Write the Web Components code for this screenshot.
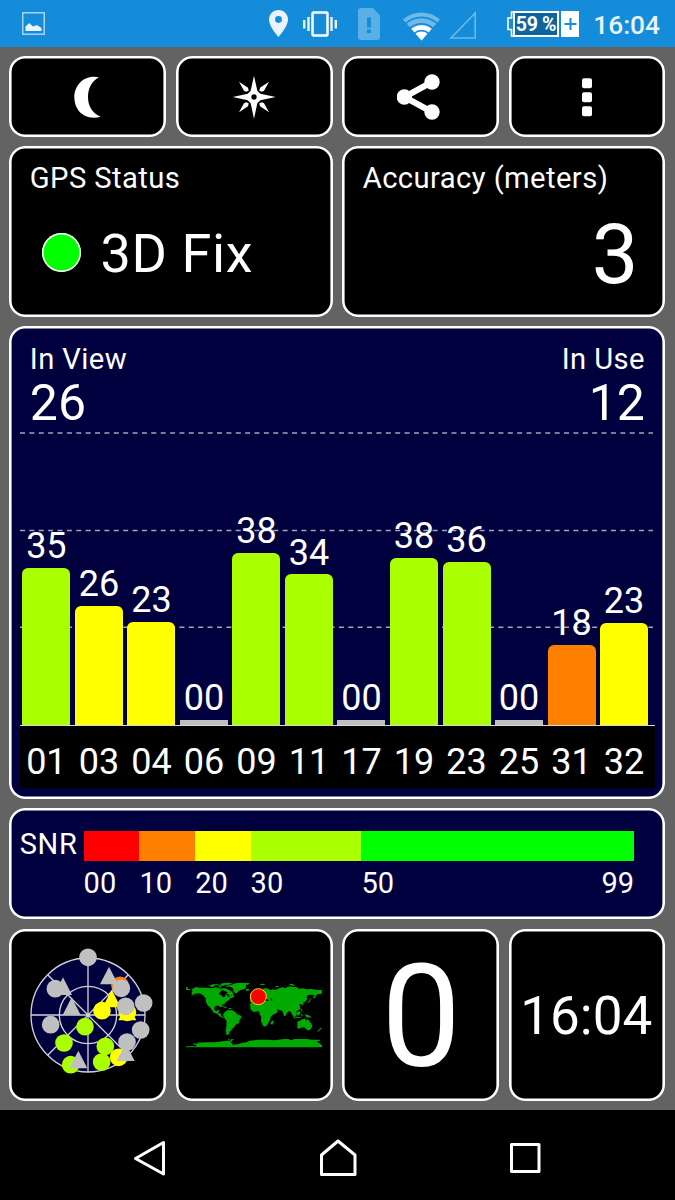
<!DOCTYPE html>
<html lang="en">
<head>
<meta charset="utf-8">
<title>GPS Status</title>
<style>
  html, body {
    margin: 0;
    height: 100%;
    background: #000;
  }
  body {
    font-family: Roboto, "Liberation Sans", sans-serif;
    color: #fff;
  }
</style>
</head>
<body>
<gps-app></gps-app>

<script>
class StatusBar extends HTMLElement {
  constructor() {
    super();
    this.attachShadow({ mode: "open" });
    this.shadowRoot.innerHTML = `
      <style>
        :host {
          display: flex;
          align-items: center;
          height: 47px;
          padding: 0 15px 0 22px;
          box-sizing: border-box;
          background: #148cd9;
        }
        svg { display: block; flex: none; }
        .spacer { flex: 1; }
        .vibrate { margin-left: 15px; }
        .sim { margin-left: 20.5px; }
        .wifi { margin-left: 23px; margin-top: 5px; }
        .signal { margin-left: 9.500px; margin-top: 3px; }
        .battery {
          display: flex;
          align-items: stretch;
          height: 26px;
          margin-left: 31px;
        }
        .level {
          width: 46px;
          box-sizing: border-box;
          border: 2px solid #fff;
          background: #0e649b;
          font-size: 19.500px;
          font-weight: 700;
          line-height: 24px;
          text-align: center;
          letter-spacing: -0.300px;
          white-space: nowrap;
        }
        .plus {
          width: 18.500px;
          margin-left: 1.500px;
          background: #fff;
        }
        .clock {
          width: 68px;
          margin-left: 13px;
          font-size: 26.300px;
          font-weight: 500;
          line-height: 32px;
          padding-top: 2px;
          text-align: right;
          color: #e8f3fb;
        }
      </style>
      <svg width="23" height="23" viewBox="0 0 23 23">
        <rect x=".75" y=".75" width="21.5" height="21.5" fill="none" stroke="#a6d3f1" stroke-width="1.5"/>
        <path d="M3.500 19V14.500L7.300 11l3.700 3.500 4-1.500 4.500 3V19z" fill="#e8f3fb"/>
      </svg>
      <div class="spacer"></div>
      <svg width="19" height="27" viewBox="0 0 19 27">
        <path fill="#e8f3fb" fill-rule="evenodd" d="M9.500 0C4.200 0 0 4.200 0 9.500 0 16.500 9.500 27 9.500 27S19 16.500 19 9.500C19 4.200 14.800 0 9.500 0zm0 6a3.400 3.400 0 1 1 0 6.800 3.400 3.400 0 0 1 0-6.800z"/>
      </svg>
      <svg class="vibrate" width="34" height="26" viewBox="0 0 34 26">
        <rect x="9.500" y="1.500" width="15" height="23" rx="1" fill="none" stroke="#fff" stroke-width="2.500"/>
        <path d="M1.200 9v8.500M5.500 6v14M28.500 6v14M32.800 9v8.500" stroke="#e8f3fb" stroke-width="2.400"/>
      </svg>
      <svg class="sim" width="22" height="32" viewBox="0 0 22 32">
        <path d="M3 0h12l7 7.500V29a3 3 0 0 1-3 3H3a3 3 0 0 1-3-3V3a3 3 0 0 1 3-3z" fill="#5aafe4"/>
        <path d="M9 9.500h4v10H9zM9 21.500h4v3.500H9z" fill="#148cd9"/>
      </svg>
      <svg class="wifi" width="37" height="29" viewBox="0 0 37 29">
        <path d="M0 7.500A28 28 0 0 1 37 7.500L18.500 28.500z" fill="#6eb9e8"/>
        <path d="M8.500 17A15 15 0 0 1 28.500 17L18.500 28.500z" fill="#fff"/>
        <path d="M2.500 11.700A23.500 23.500 0 0 1 34.500 11.700M7 16.200A17.500 17.500 0 0 1 30 16.200M11.500 21.300A10.500 10.500 0 0 1 25.500 21.300" fill="none" stroke="#148cd9" stroke-width="1.600"/>
      </svg>
      <svg class="signal" width="27" height="28" viewBox="0 0 27 28">
        <path d="M2 27L26.200 2V27z" fill="none" stroke="#6eb9e8" stroke-width="1.600"/>
      </svg>
      <div class="battery">
        <svg width="6" height="26" viewBox="0 0 6 26">
          <path d="M7 1H4.500V7H1V18.500H4.500V25H7" fill="#148cd9" stroke="#fff" stroke-width="1.600"/>
        </svg>
        <div class="level">59 %</div>
        <svg class="plus" width="18.500" height="26" viewBox="0 0 18.500 26">
          <path d="M3.500 13h12M9.500 7v12" stroke="#148cd9" stroke-width="2"/>
        </svg>
      </div>
      <div class="clock">16:04</div>
    `;
  }
}
customElements.define("status-bar", StatusBar);

class TileCard extends HTMLElement {
  constructor() {
    super();
    this.attachShadow({ mode: "open" });
    this.shadowRoot.innerHTML = `
      <style>
        :host {
          display: flex;
          flex-direction: column;
          box-sizing: border-box;
          min-width: 0;
          border-radius: 16px;
          background: #000;
          box-shadow: inset 0 0 0 2.600px #fff;
        }
        :host([navy]) { background: #00003f; }
        :host([center]) {
          align-items: center;
          justify-content: center;
        }
      </style>
      <slot></slot>
    `;
  }
}
customElements.define("tile-card", TileCard);

class SatBar extends HTMLElement {
  static get observedAttributes() {
    return ["snr", "height", "color"];
  }

  constructor() {
    super();
    this.attachShadow({ mode: "open" });
    this.shadowRoot.innerHTML = `
      <style>
        :host {
          display: flex;
          flex-direction: column;
          justify-content: flex-end;
          align-items: center;
        }
        .snr {
          font-size: 36px;
          line-height: 36px;
          margin-bottom: 3.600px;
        }
        .bar {
          width: 48px;
          border-radius: 6px 6px 0 0;
        }
        .bar.empty { border-radius: 0; }
      </style>
      <div class="snr"></div>
      <div class="bar"></div>
    `;
  }

  attributeChangedCallback() {
    const bar = this.shadowRoot.querySelector(".bar");
    const snr = this.getAttribute("snr");
    this.shadowRoot.querySelector(".snr").textContent = snr;
    bar.style.height = this.getAttribute("height") + "px";
    bar.style.background = this.getAttribute("color");
    bar.classList.toggle("empty", snr === "00");
  }
}
customElements.define("sat-bar", SatBar);

const GREEN = "#aaff00";
const YELLOW = "#ffff00";
const ORANGE = "#ff8000";
const GRAY = "#c0c0c0";

// id, signal, bar height in px, colour
const SATELLITES = [
  ["01", "35", 157, GREEN],
  ["03", "26", 118.7, YELLOW],
  ["04", "23", 102.7, YELLOW],
  ["06", "00", 5, GRAY],
  ["09", "38", 172, GREEN],
  ["11", "34", 150.3, GREEN],
  ["17", "00", 5, GRAY],
  ["19", "38", 167, GREEN],
  ["23", "36", 162.7, GREEN],
  ["25", "00", 5, GRAY],
  ["31", "18", 80, ORANGE],
  ["32", "23", 101.7, YELLOW]
];

class SnrChart extends HTMLElement {
  constructor() {
    super();
    this.attachShadow({ mode: "open" });
    const bars = SATELLITES.map(([id, snr, height, color]) =>
      `<sat-bar snr="${snr}" height="${height}" color="${color}"></sat-bar>`).join("");
    const ids = SATELLITES.map(([id]) => `<span>${id}</span>`).join("");
    this.shadowRoot.innerHTML = `
      <style>
        :host { display: block; }
        .plot {
          display: grid;
          height: 293px;
        }
        .lines, .bars { grid-area: 1 / 1; }
        .bars, .ids {
          display: grid;
          grid-template-columns: repeat(12, 52.520px);
          padding-left: 0.150px;
        }
        .ids {
          height: 62px;
          box-sizing: border-box;
          padding-top: 8.700px;
          background: #000;
          font-size: 36px;
          line-height: 54px;
          text-align: center;
        }
        .axis { height: 1.200px; background: #d8d8d8; }
      </style>
      <div class="plot">
        <svg class="lines" width="635" height="293" viewBox="0 0 635 293">
          <path d="M0 1H633M0 98.500H633M0 195.200H633" stroke="#a3a3bd" stroke-width="1.600" stroke-dasharray="5 4.380"/>
        </svg>
        <div class="bars">${bars}</div>
      </div>
      <div class="axis"></div>
      <div class="ids">${ids}</div>
    `;
  }
}
customElements.define("snr-chart", SnrChart);

class SnrScale extends HTMLElement {
  constructor() {
    super();
    this.attachShadow({ mode: "open" });
    this.shadowRoot.innerHTML = `
      <style>
        :host {
          display: flex;
          font-size: 29px;
        }
        .name {
          width: 63.800px;
          line-height: 26px;
          letter-spacing: 0.600px;
        }
        .scale {
          display: grid;
          grid-template-columns: 55.800px 55.800px 55.400px 110.800px 272.700px;
        }
        .step i { display: block; height: 30px; }
        .step div {
          display: flex;
          justify-content: space-between;
          margin-top: 5px;
          line-height: 34px;
        }
      </style>
      <div class="name">SNR</div>
      <div class="scale">
        <div class="step"><i style="background:#f00"></i><div>00</div></div>
        <div class="step"><i style="background:${ORANGE}"></i><div>10</div></div>
        <div class="step"><i style="background:${YELLOW}"></i><div>20</div></div>
        <div class="step"><i style="background:${GREEN}"></i><div>30</div></div>
        <div class="step"><i style="background:#0f0"></i><div><span>50</span><span>99</span></div></div>
      </div>
    `;
  }
}
customElements.define("snr-scale", SnrScale);

class SkyPlot extends HTMLElement {
  constructor() {
    super();
    this.attachShadow({ mode: "open" });
    const dot = (x, y, c) => `<circle cx="${x}" cy="${y}" r="26.500" fill="${c}"/>`;
    const tri = (x, y, c) => `<path d="M${x} ${y - 27}l27 53h-54z" fill="${c}"/>`;
    this.shadowRoot.innerHTML = `
      <style>
        :host { display: block; }
        svg { display: block; }
      </style>
      <svg width="136" height="136" viewBox="59 66 408 408">
        <circle cx="263" cy="270" r="171" fill="#00003f"/>
        <g fill="none" stroke="#d0d0dc" stroke-width="4">
          <circle cx="263" cy="270" r="171"/>
          <circle cx="263" cy="270" r="86"/>
          <path d="M263 99V441M92 270H434M142 149L384 391M142 391L384 149"/>
        </g>
        ${dot(263, 97, GRAY)}
        ${dot(359, 181, ORANGE)}
        ${tri(326, 152, GRAY)}
        ${dot(363, 190, GRAY)}
        ${tri(188, 184, GRAY)}
        ${dot(165, 191, GRAY)}
        ${tri(214, 244, GRAY)}
        ${tri(334, 221, YELLOW)}
        ${dot(305, 257, YELLOW)}
        ${dot(381, 262, YELLOW)}
        ${tri(381, 260, YELLOW)}
        ${dot(376, 244, GRAY)}
        ${dot(430, 234, GRAY)}
        ${dot(151, 299, GRAY)}
        ${dot(254, 305, GREEN)}
        ${dot(191, 354, GREEN)}
        ${dot(315, 364, GREEN)}
        ${dot(304, 411, GREEN)}
        ${dot(211, 419, GREEN)}
        ${tri(234, 404, GRAY)}
        ${dot(421, 315, GRAY)}
        ${dot(380, 351, GRAY)}
        ${dot(355, 397, YELLOW)}
        ${tri(376, 382, GRAY)}
      </svg>
    `;
  }
}
customElements.define("sky-plot", SkyPlot);

class WorldMap extends HTMLElement {
  constructor() {
    super();
    this.attachShadow({ mode: "open" });
    this.shadowRoot.innerHTML = `
      <style>
        :host { display: block; }
        svg { display: block; }
      </style>
      <svg width="136.670" height="136" viewBox="46 66 410 408">
        <g fill="#00aa00">
          <path d="M46 187h5v5h8v3H46zM64 192l6-2 5-4 12 2h25l10 2 10-2 8 4 10-1 4 5-6 5-4 6 8 4 6 6 5-1 2-8 8-6 5 6 4 4 6 2-2 4-8 1-2 6-10 5-4 6-8 4-1 6-4 1-4-5h-10l-4 6 1 8 6 2 6-4 2 1-3 8 7 3 2 8 8 3-3 2-11-5-5-7-12-4-6-9-8-10-3-1-6-11-1-12-8-9-10-6-14 1-4 4-8 3 6-6-6-2 4-5z"/>
          <path d="M112 182l12-3 10 3-8 4zM132 186l14 2 8-3-6 6h-14zM122 178h22v3h-18zM148 177l12-3 14-1 10 2-8 4-12 1-8 4zM152 190l12 0 10 4 12 8 2 8-8 1-8-8-8-5-10-3zM144 181h8v4h-8zM184 211l6 0 1 5-8-1z"/>
          <path d="M164 183l16-3 14-5 18-2 24 1-2 4-8 2 0 8-6 5-12 3-8 6-4 4-7-6-2-10-8-5-13 0zM225 192h10v5h-9z"/>
          <path d="M150 241l10 3 10 5-4 1-10-5zM174 249h7v3h-7z"/>
          <path d="M163 260l8-5 14 1 10 6 4 6 13 5-1 7-5 6-1 8-10 5-6 9-6 4-2 6-5 2 0 5-3 3 3 1-5-1-6-7 2-16 1-17-7-9-4-9z"/>
          <path d="M237 238l8-6 12-1 10-1 2 5 10 3 5-2 10 2 4 10 6 10 8 1-4 8-8 9-2 10-4 6-5 9-6 4-6-3-6-14 1-13-6-8 1-6-6-2-12 2-9-7-1-12z"/>
          <path d="M308 285l1 5-4 9-5-2 1-7z"/>
          <path d="M238 229l1-9 8-1 2-6 8-4 6-6 10-1 0-7 10-6 12 3 4 4 6-3 10 2 6-4 14-4 10 3 4-4 12-2 4 2 12 0 8 5 12-1 10 3 14-1 20 3h21v7l-8 0 0 4-12 1-6 4-5 10-3-2 3-9-10-1-8 1-6 7 4 4-8 9-6 4 1 7-3 0-5-5-5 3 4 6-2 9-8 3-2 3 3 8-6 3-3-5-2 4 6 10-3 1-7-11-4-9-6-3-7 6-4 10-4-2-5-14-10-4-8 0-3-2 8 6-5 7-11 4-11-14-1-1 6 14-3-2-6-12 3-7-10-1-2-6 8-3-10 1-2 7-6-3-6-6-6 0-10 9z"/>
          <path d="M264 178l14-2 6 2-8 3zM312 185l8-3 6 1-7 4zM354 178l8-2 14 5-10 1z"/>
          <path d="M237 205l5 3 3 8-8 1 2-6zM436 197l0 9-7 4 1-8z"/>
          <path d="M419 217l1 5-3 9-7 2 6-7zM340 253h3v6h-3zM361 259l6 2 11 11-3 3-6-4zM376 275l14 2v2l-14-1zM379 262l8-4 3 5-5 9-6-3zM389 249l4 2 3 10-4-4zM392 268l4 0-1 7-3-1zM401 268l9 1 9 5 3 5-8-2-5 1-4-5z"/>
          <path d="M380 290l10-4 6-4 7-1 4 6 3-5 4 4 8 10 3 6-3 8-5 5-8 0-6-7-8-1-11 4-4-2 0-9zM412 313h5v3h-5zM449 308l4 3-6 4-5 6-2-2 6-6z"/>
          <path d="M46 364h31v-3l-10-4 1-2 13 2-2-4 30-1 26 0 20-3 24-2 2-4 8-1-3 4-6 5 4 4 2 4 16-1 14-5 12-1 8-5 26-3 34 0 16 2 10-2 20-2 10 0 10 4 8-4 38 0 16 2 24 0 0 3-8 2 2 4 10 4-7 1 17 3v6H46z"/>
          <path d="M164 325h6l6 3-9 1zM170 348l3-6h5z"/>
        </g>
        <path d="M280 222l10 0 4 5-8 1zM300 219l4-1 1 10-4-2zM262 230l6-2 6 8-5-1zM166 207l8 0 3 9-5-1z"/>
        <circle cx="263" cy="215" r="24" fill="#f00" stroke="#ffd800" stroke-width="3"/>
      </svg>
    `;
  }
}
customElements.define("world-map", WorldMap);

class NavBar extends HTMLElement {
  constructor() {
    super();
    this.attachShadow({ mode: "open" });
    this.shadowRoot.innerHTML = `
      <style>
        :host {
          display: grid;
          grid-template-columns: repeat(3, 187.500px);
          justify-content: center;
          align-items: center;
          justify-items: center;
          height: 90px;
          padding-top: 4px;
          box-sizing: border-box;
          background: #000;
        }
        svg { display: block; fill: none; stroke: #fff; stroke-width: 3; stroke-linejoin: round; }
      </style>
      <svg width="40" height="40" viewBox="0 0 40 40"><path d="M5.500 21.500L33.500 5.500V37z"/></svg>
      <svg width="40" height="40" viewBox="0 0 40 40"><path d="M20 4L3.500 18V37.500H37V18z"/></svg>
      <svg width="40" height="40" viewBox="0 0 40 40"><rect x="6.500" y="7.500" width="27.500" height="27"/></svg>
    `;
  }
}
customElements.define("nav-bar", NavBar);

class GpsApp extends HTMLElement {
  constructor() {
    super();
    this.attachShadow({ mode: "open" });
    this.shadowRoot.innerHTML = `
      <style>
        :host {
          display: flex;
          flex-direction: column;
          width: 675px;
          height: 1200px;
          overflow: hidden;
        }
        main {
          flex: 1;
          display: grid;
          grid-template-columns: repeat(4, 156.850px);
          grid-template-rows: 80.700px 170.500px 472.500px 110.500px 172px;
          column-gap: 9.600px;
          row-gap: 9.450px;
          padding: 9px 0 0 9.300px;
          box-sizing: border-box;
          background: #636363;
        }
        svg { display: block; }
        .half { grid-column: span 2; }
        .full { grid-column: 1 / -1; }
        .tool { padding-top: 1px; }
        .bottom { margin-top: 1px; margin-bottom: -1px; }
        .info { padding: 14.800px 27px 0 20.500px; }
        .label {
          font-size: 29.200px;
          line-height: 34px;
          letter-spacing: 0.420px;
          white-space: nowrap;
        }
        .value {
          display: flex;
          align-items: center;
          height: 64px;
          margin-top: 27.400px;
          font-size: 54px;
          line-height: 64px;
          letter-spacing: 0.600px;
        }
        .big {
          justify-content: flex-end;
          padding-top: 1px;
          font-size: 83px;
          letter-spacing: 0;
        }
        .led {
          width: 38.700px;
          height: 38.700px;
          margin: 0 19.500px 4px 12.500px;
          border-radius: 50%;
          background: #0f0;
          box-shadow: inset 0 0 0 1.600px #fff;
        }
        .chart { padding: 16.100px 10.500px 0 10.700px; }
        .counts {
          display: flex;
          justify-content: space-between;
          height: 89.600px;
          padding: 0 10px 0 9.800px;
        }
        .counts .used { text-align: right; }
        .count { font-size: 50px; line-height: 54px; }
        .scale { padding: 22.800px 0 0 10.500px; }
        .speed { font-size: 142px; line-height: 150px; padding: 6px 0 0 1px; }
        .time { font-size: 53px; line-height: 64px; padding-top: 2px; margin-left: -1.500px; }
      </style>
      <status-bar></status-bar>
      <main>
        <tile-card center class="tool">
          <svg width="48" height="48" viewBox="191 217 144 144"><path d="M296 230C252 221 222 253 222 290C222 330 254 361 301 348C276 338 263 316 263 289C263 262 276 240 296 230z" fill="#fff"/></svg>
        </tile-card>
        <tile-card center class="tool">
          <svg width="48" height="48" viewBox="690 217 144 144">
            <path d="M762 225l10 45 9 9 46 10-46 10-9 9-10 46-10-46-9-9-45-10 45-10 9-9zM717 243l27 18 2 9-8 3-6-3zM807 243l-27 18-2 9 8 3 6-3zM717 335l27-18 2-9-8-3-6 3zM807 335l-27-18-2-9 8-3 6 3z" fill="#fff"/>
            <circle cx="762" cy="289" r="8"/>
          </svg>
        </tile-card>
        <tile-card center class="tool">
          <svg width="48" height="48" viewBox="185 82 144 144">
            <g fill="#fff">
              <circle cx="207" cy="154" r="23"/><circle cx="290" cy="109" r="23"/><circle cx="290" cy="199" r="23"/>
              <path d="M290 109L207 154l83 45" fill="none" stroke="#fff" stroke-width="18"/>
            </g>
          </svg>
        </tile-card>
        <tile-card center class="tool">
          <svg width="48" height="48" viewBox="684 82 144 144">
            <g fill="#fff"><rect x="741" y="98" width="30" height="30" rx="6"/><rect x="741" y="140" width="30" height="30" rx="6"/><rect x="741" y="182" width="30" height="30" rx="6"/></g>
          </svg>
        </tile-card>

        <tile-card class="half info">
          <div class="label">GPS Status</div>
          <div class="value"><div class="led"></div>3D Fix</div>
        </tile-card>
        <tile-card class="half info">
          <div class="label">Accuracy (meters)</div>
          <div class="value big">3</div>
        </tile-card>

        <tile-card class="full chart" navy>
          <div class="counts">
            <div><div class="label">In View</div><div class="count">26</div></div>
            <div class="used"><div class="label">In Use</div><div class="count">12</div></div>
          </div>
          <snr-chart></snr-chart>
        </tile-card>

        <tile-card class="full scale" navy>
          <snr-scale></snr-scale>
        </tile-card>

        <tile-card center class="bottom"><sky-plot></sky-plot></tile-card>
        <tile-card center class="bottom"><world-map></world-map></tile-card>
        <tile-card center class="bottom"><div class="speed">0</div></tile-card>
        <tile-card center class="bottom"><div class="time">16:04</div></tile-card>
      </main>
      <nav-bar></nav-bar>
    `;
  }
}
customElements.define("gps-app", GpsApp);
</script>
</body>
</html>
